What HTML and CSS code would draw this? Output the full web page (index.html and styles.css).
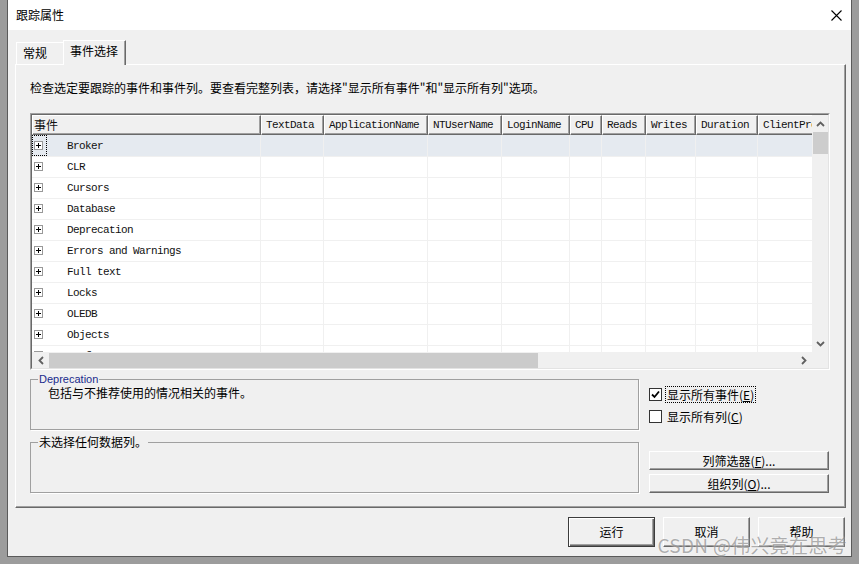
FILE: index.html
```html
<!DOCTYPE html>
<html lang="zh-CN">
<head>
<meta charset="utf-8">
<title>跟踪属性</title>
<link rel="stylesheet" href="styles.css">
</head>
<body>
<div class="window">
  <div class="titlebar">
    <span class="title">跟踪属性</span>
    <svg class="close" width="11" height="11" viewBox="0 0 11 11"><path d="M0.5 0.5 L10.5 10.5 M10.5 0.5 L0.5 10.5" stroke="#000" stroke-width="1.1" fill="none"/></svg>
  </div>
  <div class="content">
    <div class="tabs">
      <div class="tab">常规</div>
      <div class="tab active">事件选择</div>
    </div>
    <div class="panel">
      <p class="desc">检查选定要跟踪的事件和事件列。要查看完整列表，请选择"显示所有事件"和"显示所有列"选项。</p>
      <div class="grid-frame">
        <div class="grid-inner">
          <div class="viewport">
            <div class="hdr">
              <div class="hc cjk">事件</div>
              <div class="hc">TextData</div>
              <div class="hc">ApplicationName</div>
              <div class="hc">NTUserName</div>
              <div class="hc">LoginName</div>
              <div class="hc">CPU</div>
              <div class="hc">Reads</div>
              <div class="hc">Writes</div>
              <div class="hc">Duration</div>
              <div class="hc">ClientProcessID</div>
            </div>
            <div class="row sel"><div class="c first"><span class="exp focus"><span class="box"></span></span><span class="name">Broker</span></div><div class="c"></div><div class="c"></div><div class="c"></div><div class="c"></div><div class="c"></div><div class="c"></div><div class="c"></div><div class="c"></div><div class="c"></div></div>
            <div class="row"><div class="c first"><span class="exp"><span class="box"></span></span><span class="name">CLR</span></div><div class="c"></div><div class="c"></div><div class="c"></div><div class="c"></div><div class="c"></div><div class="c"></div><div class="c"></div><div class="c"></div><div class="c"></div></div>
            <div class="row"><div class="c first"><span class="exp"><span class="box"></span></span><span class="name">Cursors</span></div><div class="c"></div><div class="c"></div><div class="c"></div><div class="c"></div><div class="c"></div><div class="c"></div><div class="c"></div><div class="c"></div><div class="c"></div></div>
            <div class="row"><div class="c first"><span class="exp"><span class="box"></span></span><span class="name">Database</span></div><div class="c"></div><div class="c"></div><div class="c"></div><div class="c"></div><div class="c"></div><div class="c"></div><div class="c"></div><div class="c"></div><div class="c"></div></div>
            <div class="row"><div class="c first"><span class="exp"><span class="box"></span></span><span class="name">Deprecation</span></div><div class="c"></div><div class="c"></div><div class="c"></div><div class="c"></div><div class="c"></div><div class="c"></div><div class="c"></div><div class="c"></div><div class="c"></div></div>
            <div class="row"><div class="c first"><span class="exp"><span class="box"></span></span><span class="name">Errors and Warnings</span></div><div class="c"></div><div class="c"></div><div class="c"></div><div class="c"></div><div class="c"></div><div class="c"></div><div class="c"></div><div class="c"></div><div class="c"></div></div>
            <div class="row"><div class="c first"><span class="exp"><span class="box"></span></span><span class="name">Full text</span></div><div class="c"></div><div class="c"></div><div class="c"></div><div class="c"></div><div class="c"></div><div class="c"></div><div class="c"></div><div class="c"></div><div class="c"></div></div>
            <div class="row"><div class="c first"><span class="exp"><span class="box"></span></span><span class="name">Locks</span></div><div class="c"></div><div class="c"></div><div class="c"></div><div class="c"></div><div class="c"></div><div class="c"></div><div class="c"></div><div class="c"></div><div class="c"></div></div>
            <div class="row"><div class="c first"><span class="exp"><span class="box"></span></span><span class="name">OLEDB</span></div><div class="c"></div><div class="c"></div><div class="c"></div><div class="c"></div><div class="c"></div><div class="c"></div><div class="c"></div><div class="c"></div><div class="c"></div></div>
            <div class="row"><div class="c first"><span class="exp"><span class="box"></span></span><span class="name">Objects</span></div><div class="c"></div><div class="c"></div><div class="c"></div><div class="c"></div><div class="c"></div><div class="c"></div><div class="c"></div><div class="c"></div><div class="c"></div></div>
            <div class="row"><div class="c first"><span class="exp"><span class="box"></span></span><span class="name">Performance</span></div><div class="c"></div><div class="c"></div><div class="c"></div><div class="c"></div><div class="c"></div><div class="c"></div><div class="c"></div><div class="c"></div><div class="c"></div></div>
          </div>
          <div class="vscroll">
            <div class="arrow"><svg width="9" height="6" viewBox="0 0 9 6"><path d="M1 5 L4.5 1.5 L8 5" stroke="#606060" stroke-width="1.8" fill="none"/></svg></div>
            <div class="vthumb"></div>
            <div class="track"></div>
            <div class="arrow"><svg width="9" height="6" viewBox="0 0 9 6"><path d="M1 1 L4.5 4.5 L8 1" stroke="#606060" stroke-width="1.8" fill="none"/></svg></div>
          </div>
          <div class="hscroll">
            <div class="arrow"><svg width="6" height="9" viewBox="0 0 6 9"><path d="M5 1 L1.5 4.5 L5 8" stroke="#606060" stroke-width="1.8" fill="none"/></svg></div>
            <div class="hthumb"></div>
            <div class="track"></div>
            <div class="arrow"><svg width="6" height="9" viewBox="0 0 6 9"><path d="M1 1 L4.5 4.5 L1 8" stroke="#606060" stroke-width="1.8" fill="none"/></svg></div>
          </div>
          <div class="corner"></div>
        </div>
      </div>
      <div class="lower">
        <fieldset class="group g1">
          <legend class="blue">Deprecation</legend>
          <p class="gtext">包括与不推荐使用的情况相关的事件。</p>
        </fieldset>
        <div class="checks">
          <div class="check"><span class="cb"><svg width="9" height="9" viewBox="0 0 9 9"><path d="M1 4.5 L3.5 7 L8 1.5" stroke="#000" stroke-width="1.8" fill="none"/></svg></span><span class="clabel focused">显示所有事件(<u>E</u>)</span></div>
          <div class="check"><span class="cb"></span><span class="clabel">显示所有列(<u>C</u>)</span></div>
        </div>
        <fieldset class="group g2">
          <legend>未选择任何数据列。</legend>
        </fieldset>
        <div class="side-buttons">
          <button class="btn small">列筛选器(<u>F</u>)...</button>
          <button class="btn small">组织列(<u>O</u>)...</button>
        </div>
      </div>
    </div>
    <div class="footer">
      <button class="btn big default">运行</button>
      <button class="btn big">取消</button>
      <button class="btn big">帮助</button>
    </div>
  </div>
  <div class="watermark">CSDN @伟兴竟在思考</div>
</div>
</body>
</html>
```

FILE: styles.css
```css
* { box-sizing: border-box; }
html, body { margin: 0; padding: 0; }
body {
  background: #9c9c9c;
  font-family: "Noto Sans CJK SC", "Microsoft YaHei", sans-serif;
  font-size: 12px;
  color: #000;
  width: 859px;
  height: 564px;
  overflow: hidden;
}
.window {
  position: relative;
  margin-left: 7px;
  width: 845px;
  height: 557px;
  background: #f0f0f0;
  border: 1px solid #5a5a5a;
  border-top: 0;
  display: flex;
  flex-direction: column;
}
.titlebar {
  height: 30px;
  background: #fff;
  display: flex;
  align-items: center;
  justify-content: space-between;
  padding: 0 9px 0 8px;
  flex: none;
}
.title { font-size: 12px; line-height: 14px; }
.close { display: block; margin-top: 1px; }
.content {
  padding: 10px 5px 0 7px;
  display: flex;
  flex-direction: column;
}
.tabs {
  height: 24px;
  display: flex;
  align-items: flex-end;
  padding-left: 1px;
}
.tab {
  height: 22px;
  width: 47px;
  background: #f0f0f0;
  border-top: 1px solid #fff;
  border-left: 1px solid #fff;
  padding-left: 6px;
  line-height: 20px;
}
.tab.active {
  position: relative;
  z-index: 1;
  height: 25px;
  width: 63px;
  margin-bottom: -1px;
  border-right: 1px solid #696969;
  box-shadow: inset -1px 0 #a0a0a0;
  line-height: 20px;
  padding-left: 6px;
}
.panel {
  height: 444px;
  border-top: 1px solid #fff;
  border-left: 1px solid #fff;
  border-right: 1px solid #696969;
  border-bottom: 1px solid #696969;
  box-shadow: inset -1px -1px #a0a0a0;
  padding: 15px 15px 0 14px;
}
.desc {
  margin: 0;
  line-height: 16px;
  height: 16px;
  white-space: nowrap;
}
.grid-frame {
  margin-top: 17px;
  height: 257px;
  border-top: 1px solid #a0a0a0;
  border-left: 1px solid #a0a0a0;
  border-right: 1px solid #fff;
  border-bottom: 1px solid #fff;
}
.grid-inner {
  height: 100%;
  border-top: 1px solid #696969;
  border-left: 1px solid #696969;
  border-right: 1px solid #e3e3e3;
  border-bottom: 1px solid #e3e3e3;
  display: grid;
  grid-template-columns: 1fr 16px;
  grid-template-rows: 1fr 16px;
  background: #fff;
}
.viewport {
  overflow: hidden;
  background: #fff;
  min-width: 0;
}
.hdr, .row {
  display: grid;
  grid-template-columns: 229px 63px 104px 74px 68px 32px 44px 50px 62px 100px;
  width: 826px;
}
.hc {
  height: 20px;
  background: #f0f0f0;
  border-top: 1px solid #fff;
  border-left: 1px solid #fff;
  border-right: 1px solid #696969;
  border-bottom: 1px solid #696969;
  box-shadow: inset -1px -1px #a0a0a0;
  padding-left: 4px;
  font-family: "Liberation Mono", "DejaVu Sans Mono", monospace;
  font-size: 11px;
  letter-spacing: -0.6px;
  line-height: 18px;
  white-space: nowrap;
  overflow: hidden;
  color: #111;
}
.hc.cjk {
  font-family: "Noto Sans CJK SC", sans-serif;
  font-size: 12px;
  letter-spacing: 0;
  padding-left: 1px;
}
.row {
  height: 21px;
}
.row.sel { background: #e5eaf0; }
.c {
  border-right: 1px solid #f0f0f0;
  border-bottom: 1px solid #f0f0f0;
}
.c.first {
  display: flex;
  align-items: center;
  font-family: "Liberation Mono", "DejaVu Sans Mono", monospace;
  font-size: 11px;
  letter-spacing: -0.6px;
  white-space: nowrap;
  color: #111;
}
.exp {
  width: 15px;
  height: 21px;
  display: flex;
  align-items: center;
  padding-left: 1px;
  border: 1px dotted transparent;
  margin-right: 20px;
  flex: none;
}
.exp.focus { border-color: #000; }
.box {
  width: 9px;
  height: 9px;
  border: 1px solid #999;
  background: #fff
    linear-gradient(#000, #000) center / 5px 1px no-repeat;
  position: relative;
}
.box::after {
  content: "";
  position: absolute;
  left: 3px;
  top: 1px;
  width: 1px;
  height: 5px;
  background: #000;
}
.name { line-height: 14px; }
.vscroll {
  background: #f0f0f0;
  display: flex;
  flex-direction: column;
}
.vscroll .arrow {
  height: 17px;
  display: flex;
  align-items: center;
  justify-content: center;
  flex: none;
}
.vthumb {
  height: 22px;
  margin-left: 1px;
  background: #cdcdcd;
  flex: none;
}
.track { flex: 1; }
.hscroll {
  background: #f0f0f0;
  display: flex;
}
.hscroll .arrow {
  width: 17px;
  display: flex;
  align-items: center;
  justify-content: center;
  flex: none;
}
.hthumb {
  width: 489px;
  margin-top: 1px;
  background: #cbcbcb;
  flex: none;
}
.corner { background: #f0f0f0; }
.lower {
  display: grid;
  grid-template-columns: 609px 180px;
  column-gap: 10px;
  row-gap: 5px;
  margin-top: 3px;
}
.group {
  margin: 0;
  padding: 0 0 0 7px;
  border: 1px solid #a0a0a0;
  box-shadow: 1px 1px #fff;
  min-width: 0;
}
.group legend {
  padding: 0 1px;
  line-height: 14px;
  font-size: 12px;
}
.group legend.blue {
  font-family: "Liberation Sans", Arial, sans-serif;
  font-size: 11px;
  line-height: 12px;
  color: #1a2a8c;
}
.g1 { height: 57px; }
.g2 { height: 58px; }
.gtext {
  margin: 1px 0 0 10px;
  line-height: 14px;
}
.checks {
  display: flex;
  flex-direction: column;
  gap: 5px;
  padding-top: 13px;
}
.check {
  display: flex;
  align-items: center;
  height: 17px;
}
.cb {
  width: 13px;
  height: 13px;
  border: 1px solid #333;
  background: #fff;
  display: flex;
  align-items: center;
  justify-content: center;
  margin-right: 4px;
  flex: none;
}
.clabel {
  padding: 0 1px;
  line-height: 15px;
}
.clabel.focused { outline: 1px dotted #000; }
.side-buttons {
  display: flex;
  flex-direction: column;
  gap: 4px;
  align-self: end;
}
.btn {
  font-family: "Noto Sans CJK SC", sans-serif;
  font-size: 12px;
  color: #000;
  background: #f0f0f0;
  border-top: 1px solid #fff;
  border-left: 1px solid #fff;
  border-right: 1px solid #696969;
  border-bottom: 1px solid #696969;
  box-shadow: inset -1px -1px #a0a0a0;
  padding: 0;
  margin: 0;
}
.btn.small {
  height: 19px;
  width: 180px;
  line-height: 16px;
}
.footer {
  display: flex;
  justify-content: flex-end;
  gap: 8px;
  margin-top: 9px;
  padding-right: 1px;
}
.btn.big {
  width: 87px;
  height: 30px;
  line-height: 26px;
}
.btn.default {
  border: 1px solid #3c3c3c;
  box-shadow: inset 1px 1px #fff, inset -1px -1px #696969, inset -2px -2px #a0a0a0;
}
.watermark {
  position: absolute;
  right: 4px;
  bottom: -1px;
  font-family: "Noto Sans CJK SC", sans-serif;
  font-size: 19px;
  line-height: 24px;
  letter-spacing: 0.3px;
  color: rgba(110, 110, 110, 0.55);
  text-shadow: 0 0 2px rgba(255,255,255,0.8);
  pointer-events: none;
  white-space: nowrap;
}
```
